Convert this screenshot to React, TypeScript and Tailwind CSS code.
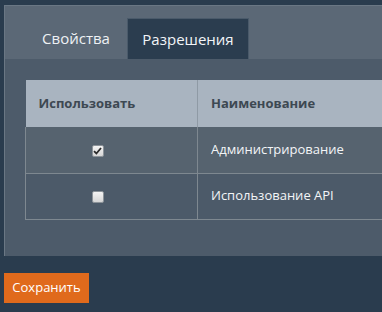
const font = { fontFamily: '"Open Sans", "Noto Sans", sans-serif' };

const rows = [
  { name: "Администрирование", checked: true },
  { name: "Использование API", checked: false },
];

const Box = ({ checked }: { checked: boolean }) => (
  <span className="inline-flex h-[12px] w-[12px] items-center justify-center rounded-[2px] border border-[#8c9399] bg-gradient-to-b from-[#f4f4f4] to-[#d6d6d6]">
    {checked && (
      <svg width="9" height="8" viewBox="0 0 9 8">
        <path d="M1 4.2 L3.4 6.5 L8 1" fill="none" stroke="#2b2b2b" strokeWidth="1.8" />
      </svg>
    )}
  </span>
);

export default function App() {
  return (
    <div className="h-[312px] w-[382px] overflow-hidden bg-[#2a3c4e] pl-[4px] pt-[5px]" style={font}>
      <div className="w-[400px] border-l border-t border-[#6a7784]">
        <div className="flex h-[53px] items-end bg-[#5b6876] pl-[20px]">
          <div className="flex h-[41px] w-[102px] items-center justify-center text-[15px] text-[#eef1f4]">Свойства</div>
          <div className="flex h-[41px] w-[122px] items-center justify-center border border-b-0 border-[#4a5a6a] bg-[#2b3d4f] text-[15px] text-[#f2f5f8]">
            Разрешения
          </div>
        </div>
        <div className="h-[197px] bg-[#4d5b6a] pl-[20px] pt-[21px]">
          <table className="w-[380px] border-collapse text-left">
            <thead>
              <tr className="h-[47px] bg-[#a9b4c0] text-[13px] font-bold text-[#3d4852]">
                <th className="w-[172px] border-r border-[#8f9aa5] pl-[13px]">Использовать</th>
                <th className="pl-[13px]">Наименование</th>
              </tr>
            </thead>
            <tbody className="text-[13px] text-[#f3f5f7]">
              {rows.map((r, i) => (
                <tr key={i} className={`h-[46px] border-b border-[#7e8890] ${i === 0 ? "bg-[#56636f]" : "bg-[#4c5a69]"}`}>
                  <td className="border-l border-r border-[#7e8890] pr-[28px] text-center">
                    <div className="flex justify-center pt-[2px]">
                      <Box checked={r.checked} />
                    </div>
                  </td>
                  <td className="pl-[13px]">{r.name}</td>
                </tr>
              ))}
            </tbody>
          </table>
        </div>
      </div>
      <button className="mt-[17px] h-[30px] w-[85px] bg-[#e06a1c] text-[13px] text-white">Сохранить</button>
    </div>
  );
}
